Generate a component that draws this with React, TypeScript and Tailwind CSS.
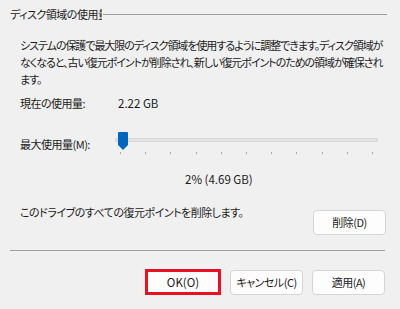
import React from 'react';

const ticks = [0, 1, 2, 3, 4, 5, 6, 7, 8, 9, 10];

export default function App() {
  return (
    <div
      className="w-[400px] h-[309px] bg-[#f0f0f0] text-[#1b1b1b] text-[11px] leading-[17px] tracking-[-0.5px] overflow-hidden [font-feature-settings:'palt']"
      style={{ fontFamily: '"Noto Sans CJK JP", "Noto Sans", sans-serif' }}
    >
      {/* group title, clipped like the original */}
      <div className="flex items-center pt-[6px] pl-[10px] pr-[13px] h-[23px]">
        <div className="w-[92px] overflow-hidden whitespace-nowrap">ディスク領域の使用量</div>
        <div className="flex-1 h-[1px] bg-[#a0a0a0] ml-[1px]" />
      </div>

      <div className="mt-[14px] pl-[20px] whitespace-nowrap tracking-[-1.05px]">
        <div>システムの保護で最大限のディスク領域を使用するように調整できます。ディスク領域が</div>
        <div>なくなると、古い復元ポイントが削除され、新しい復元ポイントのための領域が確保され</div>
        <div>ます。</div>
      </div>

      <div className="mt-[7px] pl-[20px] flex">
        <div className="w-[98px]">現在の使用量:</div>
        <div className="tracking-normal text-[11.5px]">2.22 GB</div>
      </div>

      <div className="mt-[18px] pl-[20px] flex items-start">
        <div className="w-[95px] mt-[6px]">最大使用量(M):</div>
        <div className="relative w-[263px] h-[26px]">
          <div className="absolute left-0 right-0 top-[8px] h-[4px] bg-[#e3e3e3] border border-[#d6d6d6] rounded-[1px]" />
          <svg className="absolute left-[3px] top-[2px]" width="10" height="18" viewBox="0 0 10 18">
            <path d="M0 1 Q0 0 1 0 H9 Q10 0 10 1 V13 L5 18 L0 13 Z" fill="#0067c0" />
          </svg>
          {ticks.map((i) => (
            <div
              key={i}
              className="absolute top-[22px] w-[1px] h-[2px] bg-[#a8a8a8]"
              style={{ left: 5 + i * 25.2 }}
            />
          ))}
        </div>
      </div>

      <div className="mt-[15px] pl-[185px] tracking-normal text-[11.5px]">2% (4.69 GB)</div>

      <div className="mt-[16px] pl-[20px] pr-[14px] flex items-start justify-between">
        <div>このドライブのすべての復元ポイントを削除します。</div>
        <button className="mt-[6px] w-[73px] h-[25px] bg-[#fdfdfd] border border-[#d5d5d5] rounded-[4px] text-[#1b1b1b]">
          削除(D)
        </button>
      </div>

      <div className="mt-[15px] ml-[10px] mr-[15px] h-[1px] bg-[#a0a0a0]" />

      <div className="mt-[18px] pr-[15px] flex justify-end items-center gap-[9px]">
        <div className="w-[76px] h-[26px] border-[3px] border-[#e81123] bg-[#fdfdfd] flex items-center justify-center tracking-normal text-[11.5px]">
          OK(O)
        </div>
        <button className="w-[73px] h-[25px] bg-[#fdfdfd] border border-[#d5d5d5] rounded-[4px] text-[#1b1b1b]">
          キャンセル(C)
        </button>
        <button className="w-[73px] h-[25px] bg-[#fdfdfd] border border-[#d5d5d5] rounded-[4px] text-[#1b1b1b]">
          適用(A)
        </button>
      </div>
    </div>
  );
}
